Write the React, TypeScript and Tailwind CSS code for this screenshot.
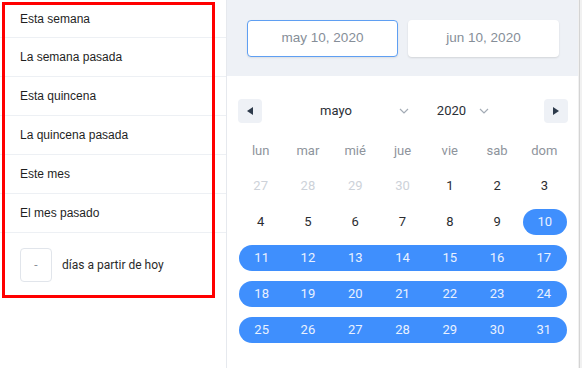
import React from 'react';

const presets = ['Esta semana', 'La semana pasada', 'Esta quincena', 'La quincena pasada', 'Este mes', 'El mes pasado'];
const weekdays = ['lun', 'mar', 'mié', 'jue', 'vie', 'sab', 'dom'];

type Day = { n: number; muted?: boolean };

const weeks: Day[][] = [
  [{ n: 27, muted: true }, { n: 28, muted: true }, { n: 29, muted: true }, { n: 30, muted: true }, { n: 1 }, { n: 2 }, { n: 3 }],
  [4, 5, 6, 7, 8, 9, 10].map(n => ({ n })),
  [11, 12, 13, 14, 15, 16, 17].map(n => ({ n })),
  [18, 19, 20, 21, 22, 23, 24].map(n => ({ n })),
  [25, 26, 27, 28, 29, 30, 31].map(n => ({ n })),
];

// selected range: may 10 -> jun 10
const inRange = (w: number, d: number) => w > 1 || (w === 1 && d === 6);

const Chevron = () => (
  <svg width="10" height="6" viewBox="0 0 10 6" className="shrink-0">
    <polyline points="1,1 5,5 9,1" fill="none" stroke="#a3abb5" strokeWidth="1.2" />
  </svg>
);

export default function App() {
  return (
    <div className="w-[582px] h-[368px] flex bg-white overflow-hidden" style={{ fontFamily: 'Roboto, sans-serif' }}>
      {/* Presets */}
      <div className="relative w-[226px] shrink-0">
        {presets.map((p, i) => (
          <div
            key={p}
            className={`${i === 0 ? 'h-[38px]' : 'h-[39px]'} border-b border-[#edf0f4] flex items-center pl-[20px] text-[12px] text-[#1f1f1f]`}
            style={{ fontFamily: '"Liberation Sans", Arial, sans-serif' }}
          >
            {p}
          </div>
        ))}
        <div className="flex items-center pt-[15px] pl-[20px]">
          <div className="w-[32px] h-[34px] border border-[#e1e5eb] rounded-[4px] flex items-center justify-center text-[12px] text-[#8a9099]">
            -
          </div>
          <span className="ml-[10px] text-[12px] text-[#2a2a2a]">días a partir de hoy</span>
        </div>
        <div className="absolute left-[2px] top-[2px] w-[213px] h-[296px] border-[3px] border-[#ff0000] pointer-events-none" />
      </div>

      {/* Calendar */}
      <div className="w-[352px] shrink-0 border-l border-[#e6e9ee]">
        <div className="h-[76px] bg-[#eef1f6] flex items-center gap-[10px] pl-[20px]">
          <div
            className="w-[151px] h-[37px] rounded-[4px] bg-white border border-[#5f9ff2] flex items-center justify-center text-[13.5px] text-[#868e98] shadow-[0_1px_2px_rgba(0,0,0,0.08)]"
            style={{ fontFamily: '"Liberation Sans", Arial, sans-serif' }}
          >
            may 10, 2020
          </div>
          <div
            className="w-[151px] h-[37px] rounded-[4px] bg-white flex items-center justify-center text-[13.5px] text-[#868e98] shadow-[0_1px_2px_rgba(0,0,0,0.12)]"
            style={{ fontFamily: '"Liberation Sans", Arial, sans-serif' }}
          >
            jun 10, 2020
          </div>
        </div>

        <div className="px-[10px]">
          <div className="flex items-center mt-[23px] h-[24px] text-[13px] text-[#2b2f36]">
            <div className="w-[24px] h-[24px] ml-[1px] rounded-[4px] bg-[#eef1f6] flex items-center justify-center">
              <svg width="6" height="8" viewBox="0 0 6 8"><polygon points="6,0 0,4 6,8" fill="#2d3a4b" /></svg>
            </div>
            <span className="ml-[58px]">mayo</span>
            <span className="ml-[47px]"><Chevron /></span>
            <span className="ml-[28px]">2020</span>
            <span className="ml-[13px]"><Chevron /></span>
            <div className="ml-auto w-[24px] h-[24px] rounded-[4px] bg-[#eef1f6] flex items-center justify-center">
              <svg width="6" height="8" viewBox="0 0 6 8"><polygon points="0,0 6,4 0,8" fill="#2d3a4b" /></svg>
            </div>
          </div>

          <div className="grid grid-cols-7 h-[34px] items-center mt-[11px] text-[13px] text-[#8e949c]">
            {weekdays.map(d => (
              <div key={d} className="text-center">{d}</div>
            ))}
          </div>

          {weeks.map((week, w) => (
            <div key={w} className="grid grid-cols-7 h-[36px] items-center text-[13px]">
              {week.map((day, d) => {
                const sel = inRange(w, d);
                const first = sel && (d === 0 || !inRange(w, d - 1));
                const last = sel && d === 6;
                return (
                  <div
                    key={d}
                    className={`h-[26px] flex items-center justify-center ${
                      sel ? 'bg-[#3f8ffd] text-[#e9f1ff]' : day.muted ? 'text-[#cdd2d9]' : 'text-[#2a2d31]'
                    } ${first ? 'rounded-l-full ml-[2px]' : ''} ${last ? 'rounded-r-full mr-[1px]' : ''}`}
                  >
                    {day.n}
                  </div>
                );
              })}
            </div>
          ))}
        </div>
      </div>

      {/* page edge behind */}
      <div className="flex-1 bg-[#f1f1f1] flex">
        <div className="w-[1px] ml-[1px] bg-[#d4d4d4]" />
      </div>
    </div>
  );
}
